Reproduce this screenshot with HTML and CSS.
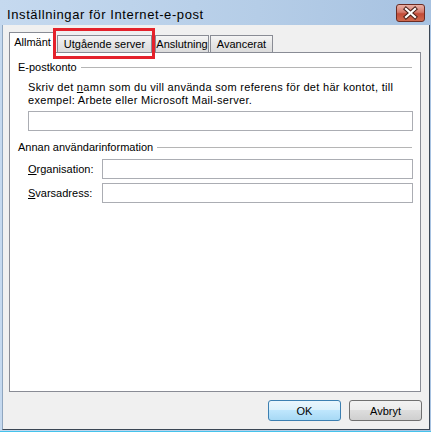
FILE: index.html
```html
<!DOCTYPE html>
<html lang="sv">
<head>
  <meta charset="UTF-8" />
  <title>Inställningar för Internet-e-post</title>
  <link rel="stylesheet" href="styles.css">
</head>
<body>
  <div class="window">
    <div class="titlebar">
      <span class="title">Inställningar för Internet-e-post</span>
      <button class="close-btn" aria-label="Stäng">
        <svg width="29" height="18" viewBox="0 0 29 18">
          <path d="M10 5 L19 13 M19 5 L10 13" stroke="#4a2018" stroke-width="4.2" stroke-linecap="square" fill="none"/>
          <path d="M10 5 L19 13 M19 5 L10 13" stroke="#ffffff" stroke-width="2.2" stroke-linecap="square" fill="none"/>
        </svg>
      </button>
    </div>
    <div class="client">
      <div class="tabs">
        <div class="tab active">Allmänt</div>
        <div class="tab tab-out">Utgående server</div>
        <div class="tab tab-conn">Anslutning</div>
        <div class="tab tab-adv">Avancerat</div>
        <div class="mark"></div>
      </div>
      <div class="panel">
        <div class="group">
          <div class="group-head"><span>E-postkonto</span><i class="rule"></i></div>
          <p class="hint">Skriv det <u>n</u>amn som du vill använda som referens för det här kontot, till exempel: Arbete eller Microsoft Mail-server.</p>
          <input class="field wide" type="text" />
        </div>
        <div class="group">
          <div class="group-head"><span>Annan användarinformation</span><i class="rule"></i></div>
          <div class="row">
            <label><u>O</u>rganisation:</label>
            <input class="field" type="text" />
          </div>
          <div class="row">
            <label><u>S</u>varsadress:</label>
            <input class="field" type="text" />
          </div>
        </div>
      </div>
      <div class="buttons">
        <button class="btn default">OK</button>
        <button class="btn">Avbryt</button>
      </div>
    </div>
  </div>
</body>
</html>
```
FILE: styles.css
```css
* { box-sizing: border-box; }
body {
  margin: 0;
  font-family: 'Liberation Sans', Arial, sans-serif;
  font-size: 11px;
  color: #000;
}
.window {
  width: 431px;
  height: 432px;
  display: flex;
  flex-direction: column;
  background: linear-gradient(90deg, #c5d9ef, #b5cde7 60%, #a7c2e1);
  padding-bottom: 1px;
  border-bottom: 1px solid #45c3ec;
}
.titlebar {
  height: 25px;
  display: flex;
  align-items: flex-start;
  justify-content: space-between;
  flex-shrink: 0;
}
.title {
  font-size: 13px;
  letter-spacing: 0.6px;
  padding: 7px 0 0 7px;
  color: #000;
}
.close-btn {
  margin: 4px 6px 0 0;
  width: 29px;
  height: 18px;
  padding: 0;
  border: 1px solid #6b2b22;
  border-radius: 3px;
  background: linear-gradient(#e9b1a6, #d47a6c 45%, #c24b38 55%, #cf6a4f);
  display: flex;
  align-items: center;
  justify-content: center;
}
.close-btn svg { display: block; margin: -1px; }
.client {
  flex: 1;
  margin: 0 1px 0 2px;
  background: #f0f0f0;
  border-left: 1px solid #8fa6bf;
  border-right: 1px solid #3a4654;
  border-bottom: 1px solid #3a4654;
  padding: 7px 8px 0 6px;
}
.tabs {
  position: relative;
  display: flex;
  align-items: flex-end;
  height: 20px;
}
.tab {
  height: 17px;
  border: 1px solid #898c95;
  border-bottom: none;
  background: linear-gradient(#f5f5f5, #e6e6e6 50%, #dcdcdc);
  line-height: 16px;
  text-align: center;
  white-space: nowrap;
}
.tab.active {
  width: 47px;
  height: 21px;
  margin-bottom: -1px;
  background: #fff;
  position: relative;
  z-index: 1;
  line-height: 18px;
}
.tab-out { width: 95px; margin-left: 1px; }
.tab-conn { width: 54px; margin-left: 3px; }
.tab-adv { width: 63px; margin-left: 1px; }
.mark {
  position: absolute;
  left: 44px;
  top: -4px;
  width: 102px;
  height: 31px;
  border: 3px solid #e4222b;
  z-index: 2;
}
.panel {
  height: 340px;
  background: #fff;
  border: 1px solid #898c95;
  padding: 0 8px;
}
.group-head {
  display: flex;
  align-items: center;
  height: 13px;
  line-height: 13px;
  margin-top: 8px;
}
.group + .group .group-head { margin-top: 10px; }
.rule {
  flex: 1;
  height: 1px;
  margin-left: 4px;
  background: #b5b5b5;
}
.hint {
  margin: 7px 0 0 10px;
  line-height: 13px;
  letter-spacing: 0.3px;
  padding-right: 8px;
}
.field {
  display: block;
  height: 20px;
  border: 1px solid #abadb3;
  background: #fff;
  margin: 0;
  font: inherit;
}
.field.wide {
  margin: 4px -1px 0 10px;
  width: calc(100% - 9px);
}
.row {
  display: flex;
  align-items: center;
  margin: 4px -1px 0 10px;
}
.group-head + .row { margin-top: 5px; }
.row label { width: 74px; }
.row .field { flex: 1; }
.buttons {
  display: flex;
  justify-content: flex-end;
  gap: 8px;
  margin: 8px -1px 0 0;
}
.btn {
  width: 73px;
  height: 21px;
  padding: 0;
  font: inherit;
  color: #000;
  border: 1px solid #707070;
  border-radius: 3px;
  background: linear-gradient(#f2f2f2, #ebebeb 50%, #dddddd 50%, #cfcfcf);
}
.btn.default {
  border-color: #3c7fb1;
  background: linear-gradient(#eaf6fd, #d9f0fc 50%, #bee6fd 50%, #a7d9f5);
}
```
